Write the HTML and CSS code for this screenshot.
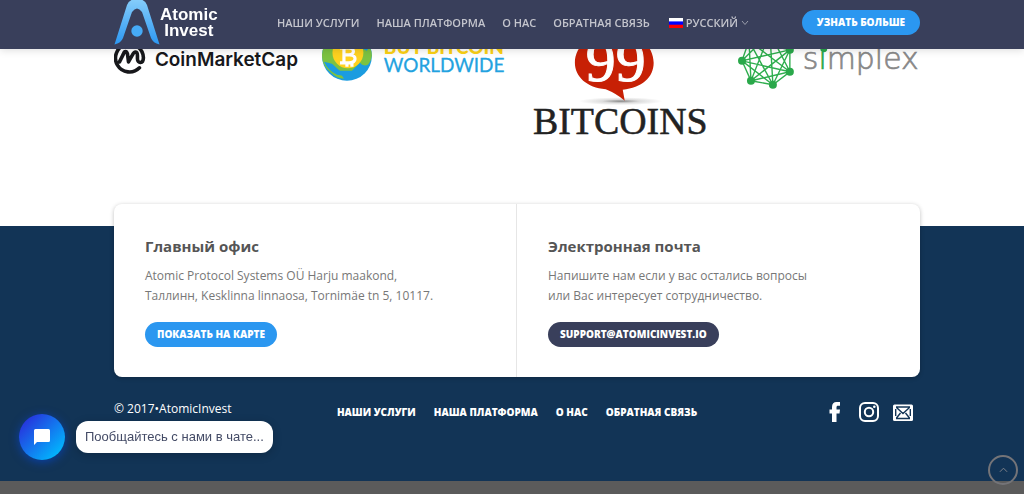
FILE: index.html
```html
<!DOCTYPE html>
<html lang="ru">
<head>
<meta charset="utf-8">
<meta name="viewport" content="width=device-width, initial-scale=1">
<title>Atomic Invest</title>
<link rel="stylesheet" href="styles.css">
</head>
<body>
<header class="header">
  <div class="container header-row">
    <a class="brand" href="#">
      <svg class="brand-mark" viewBox="0 0 46 45" aria-hidden="true">
        <defs><linearGradient id="mark" x1="0" y1="0" x2="0" y2="1"><stop offset="0" stop-color="#86cdfa"/><stop offset="1" stop-color="#2c98f3"/></linearGradient></defs>
        <path fill="url(#mark)" d="M.5 44.500 13 5Q15-1 23-1t10 6l12.500 39.500Q39 43 37 38L28 12q-5-7-10 0L9 38Q7 43 .5 44.500Z"/>
        <circle cx="23" cy="31" r="5.700" fill="#46abf7"/>
      </svg>
      <span class="brand-name">Atomic<br>Invest</span>
    </a>
    <nav class="nav" aria-label="Главное меню">
      <a href="#">НАШИ УСЛУГИ</a>
      <a href="#">НАША ПЛАТФОРМА</a>
      <a href="#">О НАС</a>
      <a href="#">ОБРАТНАЯ СВЯЗЬ</a>
      <a class="lang" href="#">
        <svg class="flag" viewBox="0 0 14 10" aria-hidden="true"><path fill="#fff" d="M0 0h14v4H0z"/><path fill="#00f" d="M0 3.400h14v3.600H0z"/><path fill="#f00" d="M0 6.700h14V10H0z"/></svg>
        <span>РУССКИЙ</span>
        <svg class="chevron" viewBox="0 0 8 6" aria-hidden="true"><path d="m1 1 3 3.500L7 1"/></svg>
      </a>
    </nav>
    <a class="pill pill-cta" href="#">УЗНАТЬ БОЛЬШЕ</a>
  </div>
</header>

<main class="container partners">
  <svg viewBox="0 0 184 144" role="img" aria-label="CoinMarketCap">
    <g fill="none" stroke="#17181b" stroke-width="3.600" stroke-linecap="round" stroke-linejoin="round">
      <path d="M25.500 68A14 14 0 1 1 29.500 58c0 6-6 6-6 1v-3c0-5-3-5-5-1l-4 7-1-8c-1-3-3-3-4 0l-4 8"/>
    </g>
    <text class="cmc" x="41" y="66">CoinMarketCap</text>
  </svg>
  <svg viewBox="0 0 184 144" role="img" aria-label="Buy Bitcoin Worldwide">
    <circle cx="25" cy="56" r="25" fill="#1b9ce0"/>
    <path fill="#7cc242" d="M0 55a25 25 0 0 1 8-17l34 1q8 8 8 17-1 6-4 9-5 2-8-2l-8 8-13 0 5 8q-7 0-13-6C3 68 0 63 0 55Z"/>
    <path fill="#1b9ce0" d="m2 62 8 2 9 8 2 4-6-1Q6 71 2 62Zm36-22 10 6-3 5-7-3Z"/>
    <circle cx="26" cy="53" r="15.500" fill="#ffd21f"/>
    <path fill="none" stroke="#fff" stroke-width="3.200" d="M22 46v18m-4-16h9c6 0 6 7 0 7h-5 6c7 0 7 8-1 8h-9m7 0v4m5-4v4m-5-23v3m5-3v3"/>
    <text class="bbw-top" x="62" y="54">BUY BITCOIN</text>
    <text class="bbw" x="62" y="72">WORLDWIDE</text>
  </svg>
  <svg viewBox="0 0 184 144" role="img" aria-label="99 Bitcoins">
    <defs><radialGradient id="shade"><stop offset="0" stop-color="#888"/><stop offset=".45" stop-color="#ddd"/><stop offset="1" stop-color="#fff"/></radialGradient></defs>
    <ellipse cx="92" cy="101.500" rx="42" ry="4" fill="url(#shade)"/>
    <path fill="#c72005" d="M46 63c0-18 17-31 40-31s39 13 39 31c0 15-12 25-31 27l2 11q-8-7-19-11.500C58 88 46 77 46 63Z"/>
    <text class="nines" x="57" y="81">99</text>
    <text class="bitcoins" x="4" y="134">BITCOINS</text>
  </svg>
  <svg viewBox="0 0 184 144" role="img" aria-label="Simplex">
    <g fill="none" stroke="#2fae4e" stroke-width="1.400">
      <path d="M5 61 12 41 33 33 53 50 53 72 36 85 14 81ZM5 61 33 33 53 72 14 81 12 41 53 50 36 85 5 61 53 50 14 81 33 33 36 85 12 41 53 72 5 61"/>
    </g>
    <g fill="#2aa84a"><circle cx="5" cy="61" r="4"/><circle cx="53" cy="50" r="4"/><circle cx="53" cy="72" r="4"/><circle cx="36" cy="85" r="4"/><circle cx="14" cy="81" r="4"/><circle cx="87" cy="49" r="3.500"/></g>
    <text class="simplex" x="66" y="69">s<tspan class="simplex-i">i</tspan>mplex</text>
  </svg>
</main>

<footer class="footer">
  <div class="container">
    <div class="contact">
      <section class="contact-item">
        <h2>Главный офис</h2>
        <p>Atomic Protocol Systems OÜ Harju maakond,<br>Таллинн, Kesklinna linnaosa, Tornimäe tn 5, 10117.</p>
        <a class="pill" href="#">ПОКАЗАТЬ НА КАРТЕ</a>
      </section>
      <section class="contact-item">
        <h2>Электронная почта</h2>
        <p>Напишите нам если у вас остались вопросы<br>или Вас интересует сотрудничество.</p>
        <a class="pill pill-dark" href="mailto:support@atomicinvest.io">SUPPORT@ATOMICINVEST.IO</a>
      </section>
    </div>
    <div class="footer-row">
      <span class="copyright">© 2017•AtomicInvest</span>
      <nav class="footer-nav" aria-label="Меню в подвале">
        <a href="#">НАШИ УСЛУГИ</a>
        <a href="#">НАША ПЛАТФОРМА</a>
        <a href="#">О НАС</a>
        <a href="#">ОБРАТНАЯ СВЯЗЬ</a>
      </nav>
      <div class="social">
        <a href="#" aria-label="Facebook"><svg viewBox="0 0 20 20"><path fill="#fff" d="M7 20v-8.500H4.500v-4H7V5c0-3.500 1.800-5 4.500-5H15v3.800h-2c-1.100 0-1.500.6-1.500 1.700v2H15l-.5 4h-3V20Z"/></svg></a>
        <a href="#" aria-label="Instagram"><svg viewBox="0 0 20 20"><g fill="none" stroke="#fff" stroke-width="2"><rect x="1" y="1" width="18" height="18" rx="5"/><circle cx="10" cy="10" r="4.200"/></g><circle cx="15.300" cy="4.700" r="1.300" fill="#fff"/></svg></a>
        <a href="#" aria-label="Email"><svg viewBox="0 0 20 20"><rect y="2.500" width="20" height="16.500" rx="1.500" fill="#fff"/><path fill="none" stroke="#123456" stroke-width="1.400" d="M3 5h14M3 16.500h14M3.500 5.500l6.500 6 6.500-6M3.500 16l4-5m9 5-4-5M2.700 7v7M17.300 7v7"/></svg></a>
      </div>
    </div>
  </div>
</footer>
<div class="bottom-bar"></div>

<div class="chat">
  <button class="chat-button" type="button" aria-label="Открыть чат">
    <svg viewBox="0 0 16 16" aria-hidden="true"><path fill="#fff" d="M1.500 0h13Q16 0 16 1.500v10q0 1.500-1.500 1.500H3l-3 3V1.500Q0 0 1.500 0Z"/></svg>
  </button>
  <span class="chat-bubble">Пообщайтесь с нами в чате...</span>
</div>
<a class="to-top" href="#" aria-label="Наверх"><svg viewBox="0 0 10 6" aria-hidden="true"><path d="m1 5 4-4 4 4"/></svg></a>
</body>
</html>
```
FILE: styles.css
```css
* { box-sizing: border-box; }
body {
  margin: 0;
  background: #fff;
  color: #777;
  font-family: "Open Sans", "Noto Sans", sans-serif;
  font-size: 12px;
  line-height: 20px;
}
a { color: inherit; text-decoration: none; }
svg { display: block; }
.container { padding: 0 104px 0 114px; }

.header {
  position: fixed;
  inset: 0 0 auto;
  z-index: 2;
  height: 49px;
  background: #393f5b;
  box-shadow: 0 1px 8px rgba(0, 0, 0, .15);
}
.header-row { display: flex; align-items: center; height: 45px; }
.brand { display: flex; align-items: center; width: 163px; color: #fff; }
.brand-mark { width: 46px; height: 45px; flex: none; }
.brand-name {
  font: bold 17px/16px "Liberation Sans", Arial, sans-serif;
  text-align: center;
}
.nav { display: flex; gap: 17px; color: #c4c5cd; font-size: 11px; font-weight: 600; white-space: nowrap; }
.lang { display: flex; align-items: center; gap: 3px; margin-left: 2px; }
.flag { width: 14px; height: 10px; }
.chevron { width: 8px; height: 6px; fill: none; stroke: #9a9dab; }

.pill {
  display: inline-block;
  padding: 0 12px;
  border-radius: 13px;
  background: #2b97f0;
  color: #fff;
  font-size: 10px;
  font-weight: 800;
  line-height: 25px;
  white-space: nowrap;
}
.pill-cta { margin-left: auto; padding: 0 15px; }
.pill-dark { background: #393f5b; }

.partners {
  display: grid;
  grid-template-columns: repeat(4, 1fr);
  gap: 24px;
  margin-bottom: 82px;
}
.partners svg { width: 100%; }
.cmc { font: 600 19px Inter, sans-serif; fill: #17181b; }
.bbw-top { font: 900 19px Lato, sans-serif; fill: #fbd116; }
.bbw { font: 400 19px Lato, sans-serif; fill: #22a2df; stroke: #22a2df; stroke-width: 0.3; }
.nines { font: 60px "Liberation Serif", serif; fill: #fff; stroke: #fff; }
.bitcoins { font: 38px "Liberation Serif", serif; fill: #222; stroke: #222; stroke-width: 0.5; }
.simplex { font: 200 30px "DejaVu Sans", sans-serif; fill: #888; stroke: #888; stroke-width: 0.7; }
.simplex-i { fill: #2aa84a; stroke: #2aa84a; }

.footer { background: #123456; }
.contact {
  position: relative;
  top: -22px;
  display: grid;
  grid-template-columns: 1fr 1fr;
  border-radius: 8px;
  background: #fff;
  box-shadow: 0 1px 4px rgba(0, 0, 0, .25);
}
.contact-item { padding: 30px 31px; }
.contact-item:first-child { border-right: 1px solid #e6e6e6; }
.contact-item h2 { margin: 0 0 8px; color: #555; font-size: 15px; line-height: 24px; }
.contact-item p { margin: 0 0 16px; }
.contact-item .pill { vertical-align: top; }
.footer-row {
  display: grid;
  grid-template-columns: 1fr auto 1fr;
  align-items: center;
  padding-bottom: 56px;
  color: #fff;
}
.copyright { margin-bottom: 6px; }
.footer-nav { display: flex; gap: 18px; font-size: 10px; font-weight: 800; white-space: nowrap; }
.social { display: flex; justify-content: flex-end; gap: 14px; padding-right: 7px; }
.social svg { width: 20px; height: 20px; }
.bottom-bar { height: 13px; background: #5b5b5b; }

.chat { position: fixed; left: 19px; bottom: 34px; display: flex; align-items: center; gap: 11px; }
.chat-button {
  display: grid;
  place-items: center;
  width: 46px;
  height: 46px;
  padding: 0;
  border: 0;
  border-radius: 50%;
  background: linear-gradient(135deg, #2a27da 5%, #00bbff 90%);
  box-shadow: 0 2px 10px rgba(0, 77, 255, .5);
}
.chat-button svg { width: 16px; height: 16px; }
.chat-bubble {
  padding: 0 9px;
  border-radius: 12px;
  background: #fff;
  color: #444b66;
  font: 13px/32px "Liberation Sans", Arial, sans-serif;
  box-shadow: 0 2px 10px rgba(0, 0, 0, .2);
}
.to-top {
  position: fixed;
  right: 6px;
  bottom: 9px;
  display: grid;
  place-items: center;
  width: 30px;
  height: 30px;
  border: 2px solid #747478;
  border-radius: 50%;
}
.to-top svg { width: 9px; height: 6px; fill: none; stroke: #8a8a8e; }
```
